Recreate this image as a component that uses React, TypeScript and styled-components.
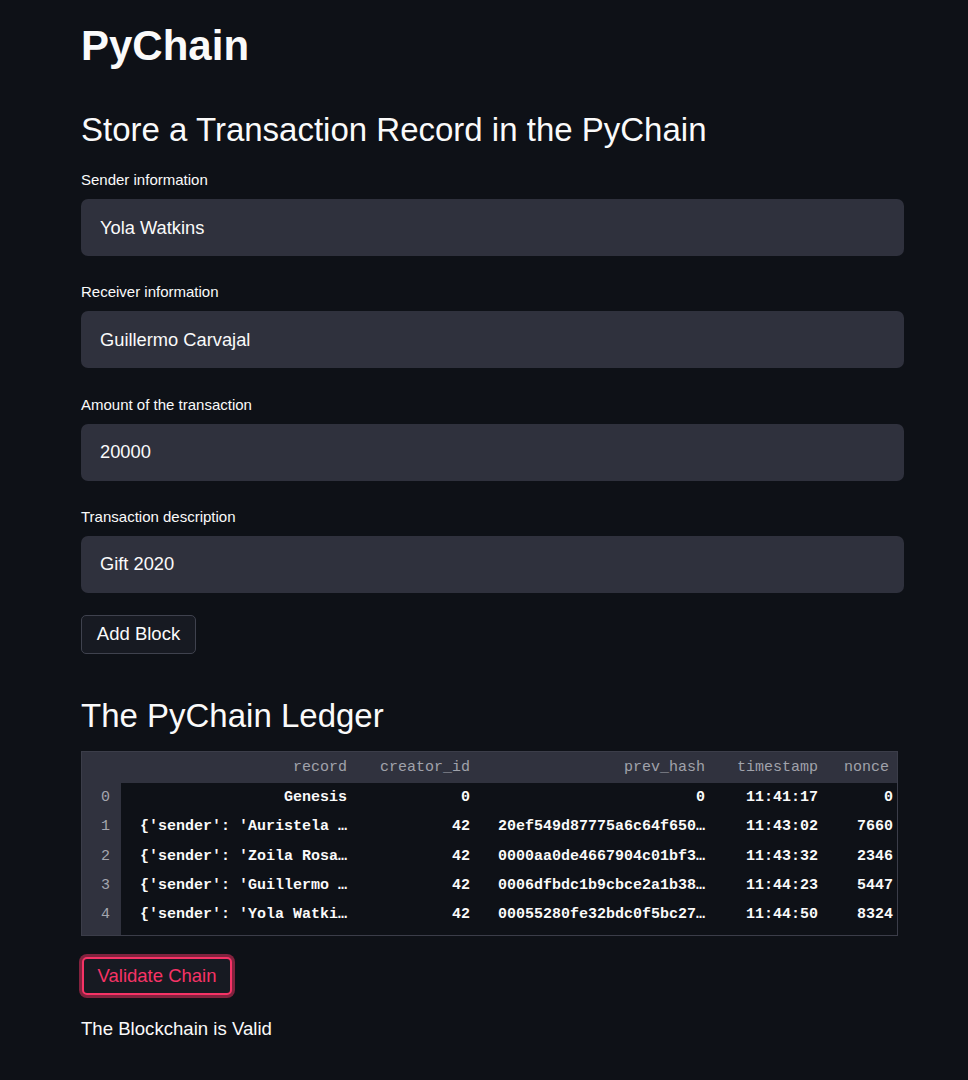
import React from "react";
import styled, { createGlobalStyle } from "styled-components";

const Global = createGlobalStyle`
  html, body { margin: 0; padding: 0; background: #0e1117; }
  body { font-family: "Liberation Sans", Arial, Helvetica, sans-serif; color: #fafafa; }
  * { box-sizing: border-box; }
`;

const Page = styled.main`
  min-height: 1080px;
  background: #0e1117;
  padding: 20px 0 40px 81px;
  display: flex;
  flex-direction: column;
  align-items: flex-start;
`;

const Title = styled.h1`
  margin: 0;
  font-size: 42px;
  line-height: 52px;
  font-weight: 700;
  color: #fafafa;
`;

const Heading = styled.h2<{ $top: number }>`
  margin: ${(p) => p.$top}px 0 0 0;
  font-size: 33px;
  line-height: 40px;
  font-weight: 400;
  color: #fafafa;
`;

const Form = styled.div`
  display: flex;
  flex-direction: column;
  gap: 26.3px;
  margin-top: 20px;
  width: 823px;
`;

const Field = styled.div`
  display: flex;
  flex-direction: column;
  gap: 9px;
`;

const Label = styled.label`
  font-size: 15px;
  line-height: 20px;
  color: #fafafa;
`;

const Input = styled.input`
  height: 57px;
  width: 100%;
  border: none;
  outline: none;
  border-radius: 7px;
  background: #2f313d;
  color: #fafafa;
  font-family: "Liberation Sans", Arial, sans-serif;
  font-size: 18.3px;
  padding: 0 19px;
`;

const Button = styled.button<{ $active?: boolean }>`
  font-family: "Liberation Sans", Arial, sans-serif;
  font-size: 18.5px;
  line-height: 24px;
  border-radius: 5px;
  cursor: pointer;
  background: #171a22;
  color: ${(p) => (p.$active ? "#f63366" : "#fafafa")};
  border: ${(p) => (p.$active ? "2px solid #f63366" : "1px solid #3f424e")};
  box-shadow: ${(p) => (p.$active ? "0 0 0 3px rgba(246, 51, 102, 0.5)" : "none")};
`;

const AddButton = styled(Button)`
  margin-top: 22px;
  height: 39px;
  width: 115px;
  padding: 0;
`;

const ValidateButton = styled(Button)`
  margin: 21px 0 0 1px;
  height: 38px;
  width: 150px;
  padding: 0;
`;

const TableWrap = styled.div`
  margin-top: 15px;
  width: 817px;
  border: 1px solid #3b3d49;
  background: #0e1117;
`;

const Table = styled.table`
  width: 815px;
  table-layout: fixed;
  border-collapse: collapse;
  font-family: "Liberation Mono", "Courier New", monospace;
  font-size: 15px;
`;

const HeadCell = styled.th<{ $w: number }>`
  width: ${(p) => p.$w}px;
  height: 31px;
  background: #30323e;
  color: #a0a2ab;
  font-weight: 400;
  text-align: right;
  padding: 0 8px 0 0;
  white-space: nowrap;
  overflow: hidden;
`;

const IndexCell = styled.td`
  background: #30323e;
  color: #a4a6ae;
  text-align: center;
  font-weight: 400;
  padding: 0 0 0 8px;
  height: 29.3px;
`;

const Cell = styled.td<{ $last?: boolean }>`
  color: #fafafa;
  font-weight: 700;
  text-align: right;
  padding: 0 ${(p) => (p.$last ? 4 : 8)}px 0 0;
  white-space: nowrap;
  overflow: hidden;
  height: 29.3px;
`;

const FillRow = styled.tr`
  height: 6px;
`;

const FillIndex = styled.td`
  background: #30323e;
  padding: 0;
  height: 6px;
`;

const Message = styled.p`
  margin: 22px 0 0 0;
  font-size: 18.6px;
  line-height: 24px;
  color: #fafafa;
`;

const columns = [
  { key: "", w: 39 },
  { key: "record", w: 234 },
  { key: "creator_id", w: 123 },
  { key: "prev_hash", w: 235 },
  { key: "timestamp", w: 113 },
  { key: "nonce", w: 71 },
];

const rows = [
  ["Genesis", "0", "0", "11:41:17", "0"],
  ["{'sender': 'Auristela \u2026", "42", "20ef549d87775a6c64f650\u2026", "11:43:02", "7660"],
  ["{'sender': 'Zoila Rosa\u2026", "42", "0000aa0de4667904c01bf3\u2026", "11:43:32", "2346"],
  ["{'sender': 'Guillermo \u2026", "42", "0006dfbdc1b9cbce2a1b38\u2026", "11:44:23", "5447"],
  ["{'sender': 'Yola Watki\u2026", "42", "00055280fe32bdc0f5bc27\u2026", "11:44:50", "8324"],
];

const fields = [
  ["Sender information", "Yola Watkins"],
  ["Receiver information", "Guillermo Carvajal"],
  ["Amount of the transaction", "20000"],
  ["Transaction description", "Gift 2020"],
];

export default function App() {
  return (
    <>
      <Global />
      <Page>
        <Title>PyChain</Title>
        <Heading $top={38}>Store a Transaction Record in the PyChain</Heading>
        <Form>
          {fields.map(([label, value]) => (
            <Field key={label}>
              <Label>{label}</Label>
              <Input defaultValue={value} />
            </Field>
          ))}
        </Form>
        <AddButton>Add Block</AddButton>
        <Heading $top={42}>The PyChain Ledger</Heading>
        <TableWrap>
          <Table>
            <thead>
              <tr>
                {columns.map((c) => (
                  <HeadCell key={c.key || "idx"} $w={c.w}>
                    {c.key}
                  </HeadCell>
                ))}
              </tr>
            </thead>
            <tbody>
              {rows.map((r, i) => (
                <tr key={i}>
                  <IndexCell>{i}</IndexCell>
                  {r.map((v, j) => (
                    <Cell key={j} $last={j === r.length - 1}>
                      {v}
                    </Cell>
                  ))}
                </tr>
              ))}
              <FillRow>
                <FillIndex />
                <td colSpan={5} />
              </FillRow>
            </tbody>
          </Table>
        </TableWrap>
        <ValidateButton $active>Validate Chain</ValidateButton>
        <Message>The Blockchain is Valid</Message>
      </Page>
    </>
  );
}
